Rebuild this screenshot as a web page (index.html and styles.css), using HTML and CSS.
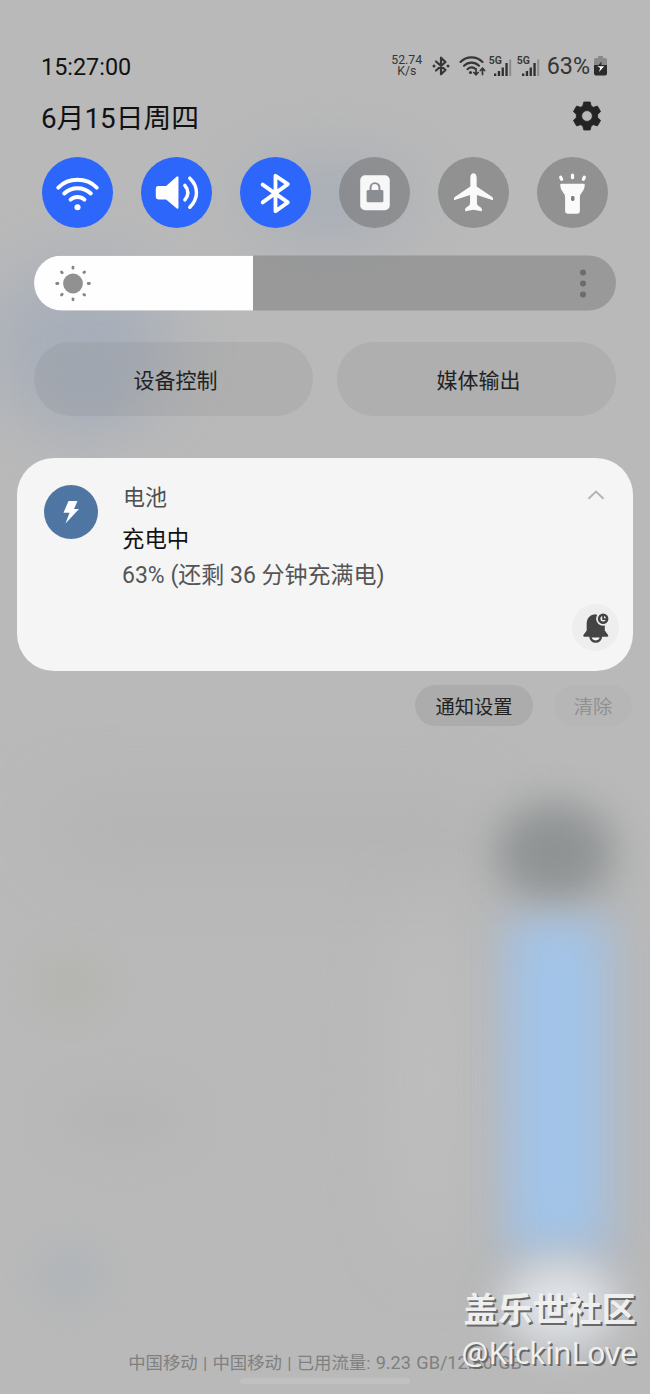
FILE: index.html
```html
<!DOCTYPE html>
<html lang="zh-CN">
<head>
<meta charset="utf-8">
<title>通知面板</title>
<link rel="stylesheet" href="styles.css">
</head>
<body>
<div class="screen">
  <svg class="wallpaper" viewBox="0 0 650 1394" aria-hidden="true">
    <defs>
      <filter id="soft" x="-100%" y="-100%" width="300%" height="300%" color-interpolation-filters="sRGB"><feGaussianBlur stdDeviation="20"/></filter>
      <filter id="wide" x="-150%" y="-150%" width="400%" height="400%" color-interpolation-filters="sRGB"><feGaussianBlur stdDeviation="34"/></filter>
    </defs>
    <rect width="650" height="1394" fill="#b9b9b9"/>
    <ellipse cx="330" cy="200" rx="85" ry="38" fill="#a4abb7" opacity=".9" filter="url(#wide)"/>
    <ellipse cx="80" cy="345" rx="95" ry="85" fill="#a5adba" opacity=".85" filter="url(#wide)"/>
    <ellipse cx="88" cy="390" rx="35" ry="25" fill="#9caabd" opacity=".5" filter="url(#soft)"/>
    <rect x="60" y="800" width="420" height="60" fill="#b3b3b3" filter="url(#wide)"/>
    <ellipse cx="70" cy="985" rx="35" ry="28" fill="#b2b2ab" opacity=".8" filter="url(#soft)"/>
    <ellipse cx="120" cy="1120" rx="60" ry="25" fill="#b4b4b4" filter="url(#soft)"/>
    <ellipse cx="70" cy="1275" rx="36" ry="30" fill="#adb3b9" opacity=".8" filter="url(#soft)"/>
    <ellipse cx="430" cy="1080" rx="35" ry="180" fill="#bebebe" filter="url(#wide)"/>
    <rect x="500" y="910" width="120" height="360" fill="#b1bac6" filter="url(#soft)"/>
    <ellipse cx="555" cy="852" rx="60" ry="50" fill="#8b8f90" opacity=".9" filter="url(#soft)"/>
    <rect x="513" y="924" width="88" height="320" fill="#a2c4e8" filter="url(#soft)"/>
    <ellipse cx="560" cy="1304" rx="56" ry="42" fill="#dfe3e8" filter="url(#soft)"/>
  </svg>

  <header class="status">
    <time class="clock">15:27:00</time>
    <div class="status-icons">
      <div class="speed"><span>52.74</span><span>K/s</span></div>
      <svg class="st-bt" viewBox="0 0 18 20"><path d="M4 5.500 13.500 14 9 18.300V1.700L13.500 6 4 14.500" fill="none" stroke="#363636" stroke-width="2.200" stroke-linejoin="round" stroke-linecap="round"/><circle cx="2" cy="10" r="1.500" fill="#363636"/><circle cx="16" cy="10" r="1.500" fill="#363636"/></svg>
      <svg class="st-wifi" viewBox="0 0 27 20"><g fill="none" stroke="#363636" stroke-width="2.100" stroke-linecap="round"><path d="M1.500 6C7.500-.2 17.500-.2 23.500 6M5 9.800c4.300-4.200 10.700-4.200 15 0M8.500 13.200c2.600-2.300 5-2.300 7.500-.5"/><path d="M17 12.500v6M14.800 16.500 17 18.700l2.200-2.200M23.500 18.500v-6M21.300 14.500l2.200-2.200 2.200 2.200" stroke-width="1.700"/></g><circle cx="11.500" cy="16.500" r="1.600" fill="#363636"/></svg>
      <div class="cell"><span>5G</span><svg viewBox="0 0 18 18"><path d="M0 15.500h2.300V18H0zM3.800 13h2.300v5H3.800zM7.600 9.500h2.300V18H7.600zM11.400 5h2.300v13h-2.300z" fill="#2f2f2f"/><path d="M15.200 1.500h2V18h-2z" fill="#8b8b8b"/></svg></div>
      <div class="cell"><span>5G</span><svg viewBox="0 0 18 18"><path d="M0 15.500h2.300V18H0zM3.800 13h2.300v5H3.800zM7.600 9.500h2.300V18H7.600zM11.400 5h2.300v13h-2.300z" fill="#2f2f2f"/><path d="M15.200 1.500h2V18h-2z" fill="#8b8b8b"/></svg></div>
      <span class="percent">63%</span>
      <svg class="st-batt" viewBox="0 0 13 20"><path d="M4 0h5v2h2.500Q13 2 13 4v5H0V4Q0 2 1.500 2H4z" fill="#8a8a8a"/><path d="M0 9h13v8.500q0 2-2 2H2q-2 0-2-2z" fill="#2b2b2b"/><path d="M7.500 5.500 4.500 9h3z" fill="#333"/><path d="M3.200 10.200h7L5 16l1.200-4z" fill="#fff"/></svg>
    </div>
  </header>

  <div class="date-row">
    <span class="date">6月15日周四</span>
    <svg class="gear" viewBox="0 0 28 30"><path fill-rule="evenodd" d="M10.800 1h6.400l1 4 2.200 1.300 4-1.200 3.200 5.500-3 2.900v3l3 2.900-3.200 5.500-4-1.200-2.200 1.300-1 4h-6.400l-1-4-2.200-1.300-4 1.200L.4 19.400l3-2.900v-3l-3-2.900 3.200-5.500 4 1.200L9.800 5zM14 9.600a5.400 5.400 0 1 0 0 10.800 5.400 5.400 0 0 0 0-10.800z" fill="#242424" stroke="#242424" stroke-width=".8" stroke-linejoin="round"/></svg>
  </div>

  <div class="tiles">
    <div class="tile on"><svg viewBox="0 0 72 72"><g fill="none" stroke="#fff" stroke-width="4" stroke-linecap="round"><path d="M16.500 31C27 20.500 45 20.500 55.500 31M22.500 37c7.500-7.200 19.500-7.200 27 0M29 43.200c4-3.600 10-3.600 14 0"/></g><circle cx="36" cy="51" r="3.100" fill="#fff"/></svg></div>
    <div class="tile on"><svg viewBox="0 0 72 72"><path d="M17.500 29.500h8L36 20q2-1.500 2 .8v30.400q0 2.300-2 .8L25.500 43h-8q-2.500 0-2.500-2.500V32q0-2.500 2.500-2.500z" fill="#fff"/><g fill="none" stroke="#fff" stroke-width="3.500" stroke-linecap="round"><path d="M44.500 28.700q6 7.300 0 14.800M49.500 21.500c9 8.500 9 20.500 0 29.500"/></g></svg></div>
    <div class="tile on"><svg viewBox="0 0 72 72"><path d="M23 28 48.500 46 36 55V19l12.500 8.500L23 46" fill="none" stroke="#fff" stroke-width="3.900" stroke-linejoin="round" stroke-linecap="round"/></svg></div>
    <div class="tile"><svg viewBox="0 0 72 72"><rect x="21.500" y="18.500" width="30" height="35.500" rx="5" fill="#f7f7f7"/><rect x="28" y="33.500" width="17" height="12.500" rx="1.500" fill="#8a8d92"/><path d="M32 34v-3a4.500 4.500 0 0 1 9 0v3" fill="none" stroke="#8a8d92" stroke-width="2"/></svg></div>
    <div class="tile"><svg viewBox="0 0 72 72"><path d="M36 16.500c2 0 3.200 2 3.200 4.500v9L55 40.500q1.200 1 .8 3.300L39.500 38.500v8.200q0 2.300 2 3.300 2.500 1.300 3 2.700.3 1-.2 2.200L36 53.500l-8.300 1.400q-.5-1.200-.2-2.200.5-1.400 3-2.700 2-1 2-3.300v-8.200L16.200 43.800q-.4-2.300.8-3.300L32.800 30v-9c0-2.500 1.200-4.500 3.200-4.500z" fill="#fafafa"/></svg></div>
    <div class="tile"><svg viewBox="0 0 72 72"><path d="M25 27h22q1.500 0 1.500 1.500 0 4-3 7.500Q43.500 38 43.500 41v14q0 2.500-2.500 2.500H31q-2.500 0-2.500-2.500V41q0-3-2-5-3-3.500-3-7.500 0-1.500 1.500-1.500z" fill="#fafafa"/><rect x="34.500" y="39.500" width="3.500" height="5" rx="1.500" fill="#7d7d7d"/><path d="M36 18.500v2.500M24 20.500l1 2.200M48 20.500l-1 2.200" stroke="#fafafa" stroke-width="3.300" stroke-linecap="round"/></svg></div>
  </div>

  <div class="slider">
    <div class="slider-fill"><svg viewBox="0 0 38 38"><circle cx="19" cy="19" r="9.900" fill="#919191"/><path d="M19 2.700v1M19 34.300v1M2.700 19h1.200M34.200 19h1.200M7.500 7.500l.7.700M29.900 29.900l.7.700M7.500 30.500l.7-.7M29.900 8.100l.7-.7" stroke="#858585" stroke-width="2.800" stroke-linecap="round"/></svg></div>
    <div class="dots"><i></i><i></i><i></i></div>
  </div>

  <div class="wide-buttons">
    <div class="wide-button">设备控制</div>
    <div class="wide-button">媒体输出</div>
  </div>

  <section class="card">
    <div class="app-icon"><svg viewBox="0 0 54 54"><path d="M24.500 16h9l-3.500 8h5L21.500 38.500l4-10.800h-6z" fill="#fff"/></svg></div>
    <div class="card-text">
      <div class="app">电池</div>
      <div class="title">充电中</div>
      <div class="detail">63% (还剩 36 分钟充满电)</div>
    </div>
    <div class="card-side">
      <svg class="chevron" viewBox="0 0 18 10"><path d="M1.500 8.800 9 1.500l7.500 7.300" fill="none" stroke="#b3b3b3" stroke-width="1.900"/></svg>
      <div class="snooze"><svg viewBox="0 0 48 48"><path d="M18.800 33h10.800a5.400 5.400 0 0 1-10.800 0z" fill="#f4f4f4" stroke="#444" stroke-width="2.400"/><path d="M24.500 10.500c-6 0-9.500 4-9.500 10v6.500l-3.500 5q-.4 1.500 1 1.500h23.500q1.400 0 1-1.500l-3.500-5V18z" fill="#444"/><circle cx="31.800" cy="15" r="7.200" fill="#eee"/><circle cx="31.800" cy="15" r="4.100" fill="#eee" stroke="#444" stroke-width="2.600"/><path d="M31.800 12v3.500h3.500" fill="none" stroke="#444" stroke-width="1.800"/></svg></div>
    </div>
  </section>

  <div class="actions">
    <div class="pill">通知设置</div>
    <div class="pill faded">清除</div>
  </div>

  <footer class="footer">
    <div class="carrier">中国移动 | 中国移动 | 已用流量: <span class="usage">9.23 GB/12.80 GB</span></div>
    <div class="home-bar"></div>
  </footer>

  <div class="watermark"><div class="mark-cn">盖乐世社区</div><div class="mark-user">@KickinLove</div></div>
</div>
</body>
</html>
```
FILE: styles.css
```css
* { box-sizing: border-box; }
body { margin: 0; font-family: Roboto, "Noto Sans CJK SC", sans-serif; color: #111; }
svg { display: block; flex: none; }
.screen { position: relative; isolation: isolate; width: 650px; height: 1394px; overflow: hidden; display: flex; flex-direction: column; white-space: nowrap; }
.wallpaper { position: absolute; inset: 0; width: 650px; height: 1394px; z-index: -1; }

.status { display: flex; justify-content: space-between; align-items: center; height: 32px; margin-top: 50px; padding: 0 43px 0 41px; }
.clock { font-size: 23.4px; line-height: 32px; padding-top: 1px; }
.status-icons { display: flex; align-items: center; color: #353535; }
.speed { display: flex; flex-direction: column; align-items: center; font-size: 12.3px; line-height: 11px; width: 32px; margin-right: 9px; }
.st-bt { width: 18px; height: 20px; margin-right: 9px; }
.st-wifi { width: 27px; height: 20px; margin-right: 3px; }
.cell { display: grid; width: 24px; height: 20px; margin-right: 4px; }
.cell span { grid-area: 1 / 1; font-size: 10.5px; line-height: 10px; font-weight: 600; }
.cell svg { grid-area: 1 / 1; width: 18px; height: 18px; justify-self: end; align-self: end; margin-right: 1px; }
.percent { font-size: 23.3px; line-height: 32px; margin: 0 4px 0 2px; }
.st-batt { width: 13px; height: 20px; }

.date-row { display: flex; justify-content: space-between; align-items: center; height: 40px; margin-top: 14px; padding: 0 49px 0 41px; }
.date { font-size: 27.8px; line-height: 40px; padding-top: 6px; }
.gear { width: 28px; height: 30px; margin-bottom: 1px; }

.tiles { display: flex; justify-content: space-between; margin-top: 21px; padding: 0 42px; height: 72px; }
.tile { width: 71px; height: 71px; border-radius: 50%; background: rgba(105, 105, 105, .5); }
.tile.on { background: #2d66fb; }

.slider { display: flex; justify-content: space-between; align-items: center; height: 55px; margin: 26px 34px 0; border-radius: 28px; background: rgba(120, 120, 120, .48); overflow: hidden; transform: translateY(.5px); }
.slider-fill { width: 219px; height: 56px; background: #fefefe; display: flex; align-items: center; padding-left: 20px; }
.slider-fill svg { width: 38px; height: 38px; }
.dots { display: flex; flex-direction: column; gap: 5px; margin-right: 30px; }
.dots i { width: 6px; height: 6px; border-radius: 50%; background: #6c6c6c; }

.wide-buttons { display: flex; gap: 24px; margin: 32px 34px 0; height: 74px; }
.wide-button { flex: 1; border-radius: 37px; background: rgba(135, 135, 135, .2); display: flex; align-items: center; justify-content: center; font-size: 21px; color: #222; padding: 0 0 0 4px; }

.card { display: flex; margin: 41.500px 17px 0; height: 213px; border-radius: 37px; background: #f5f5f5; padding: 27px 14px 0 27px; }
.app-icon { width: 54px; height: 54px; border-radius: 50%; background: #4f76a3; }
.card-text { flex: 1; margin-left: 25px; }
.app { font-size: 22px; line-height: 30px; color: #505050; margin-top: -2px; }
.title { font-size: 22.4px; line-height: 30px; color: #111; margin-top: 11px; margin-left: -1px; }
.detail { font-size: 23px; line-height: 30px; color: #555; margin-top: 7px; margin-left: -1px; }
.card-side { display: flex; flex-direction: column; align-items: center; justify-content: space-between; height: 165px; margin-top: 1px; }
.chevron { width: 18px; height: 10px; margin-top: 4px; }
.snooze { width: 47px; height: 47px; border-radius: 50%; background: #eee; }

.actions { display: flex; gap: 21px; height: 41px; margin: 14px 18px 0 415px; }
.pill { width: 118px; border-radius: 21px; background: #acacac; font-size: 19.3px; line-height: 45px; text-align: center; color: #222; }
.pill.faded { width: 78px; background: rgba(165, 165, 165, .15); color: #919191; }

.footer { margin-top: auto; display: flex; flex-direction: column; align-items: center; height: 44px; }
.carrier { font-size: 17.4px; line-height: 26px; color: #808080; word-spacing: .9px; }
.usage { font-size: 18.1px; }
.home-bar { width: 170px; height: 6px; margin-top: 2px; border-radius: 3px; background: #c1c1c1; }

.watermark { position: absolute; right: 13px; top: 1284px; color: #efefef; text-shadow: 2px 2px 0 #686868; text-align: right; }
.mark-cn { font: bold 34.5px/46px "Noto Sans CJK SC", sans-serif; padding-right: 1px; }
.mark-user { font: 30px/46px "Noto Sans", sans-serif; }
```
